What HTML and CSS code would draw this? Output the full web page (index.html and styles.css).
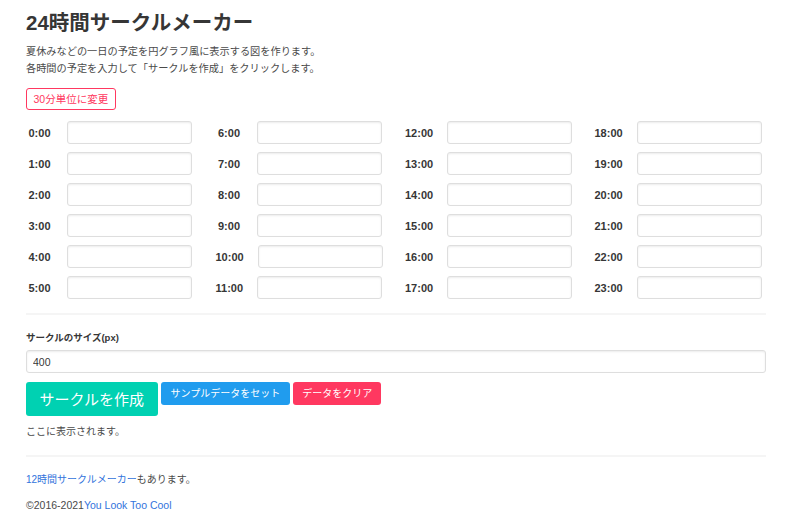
FILE: index.html
```html
<!DOCTYPE html>
<html lang="ja">
<head>
  <meta charset="UTF-8">
  <title>24時間サークルメーカー</title>
  <link rel="stylesheet" href="styles.css">
</head>
<body>
  <div class="page">
    <h1 class="title">24時間サークルメーカー</h1>
    <p class="desc">夏休みなどの一日の予定を円グラフ風に表示する図を作ります。<br>各時間の予定を入力して「サークルを作成」をクリックします。</p>

    <button class="btn btn-outline">30分単位に変更</button>

    <div class="hours" id="hours"></div>

    <hr>

    <label class="field-label" for="size">サークルのサイズ(px)</label>
    <input class="input input-size" id="size" type="text" value="400">

    <div class="buttons">
      <button class="btn btn-primary">サークルを作成</button>
      <button class="btn btn-info">サンプルデータをセット</button>
      <button class="btn btn-danger">データをクリア</button>
    </div>

    <p class="result">ここに表示されます。</p>

    <hr class="hr-bottom">

    <p class="note"><a href="#">12時間サークルメーカー</a>もあります。</p>
    <p class="copy">©2016-2021<a href="#">You Look Too Cool</a></p>
  </div>

  <script>
    const hours = document.getElementById("hours");
    for (let c = 0; c < 4; c++) {
      const col = document.createElement("div");
      col.className = "hour-col";
      for (let r = 0; r < 6; r++) {
        const h = c * 6 + r;
        const row = document.createElement("div");
        row.className = "hour-row";
        row.innerHTML = `<label class="hour-label">${h}:00</label><input class="input hour-input" type="text">`;
        col.appendChild(row);
      }
      hours.appendChild(col);
    }
  </script>
</body>
</html>
```

FILE: styles.css
```css
body {
  margin: 0;
  font-family: 'Liberation Sans', 'Noto Sans CJK JP', sans-serif;
  background: #fff;
  color: #4a4a4a;
  font-size: 10px;
}

.page {
  width: 740px;
  padding: 11px 34px 0 26px;
}

.title {
  margin: 0;
  font-size: 20.5px;
  line-height: 24px;
  font-weight: 600;
  color: #363636;
}

.desc {
  margin: 8px 0 0;
  line-height: 17px;
  font-size: 10.2px;
}

.btn {
  font-family: inherit;
  border: 1px solid transparent;
  border-radius: 3px;
  cursor: pointer;
  color: #fff;
  line-height: 1;
  margin: 0;
}

.btn-outline {
  margin-top: 11px;
  height: 22px;
  padding: 0 6.5px;
  font-size: 10.5px;
  background: #fff;
  border-color: #ff3860;
  color: #ff3860;
  display: block;
}

.hours {
  margin-top: 11px;
  display: grid;
  grid-template-columns: repeat(4, 166px);
  column-gap: 23.5px;
}

.hour-col {
  display: flex;
  flex-direction: column;
  gap: 8px;
}

.hour-row {
  display: flex;
  align-items: center;
}

.hour-label {
  width: 28px;
  text-align: center;
  font-weight: bold;
  font-size: 11px;
  color: #363636;
  white-space: nowrap;
}

.input {
  box-sizing: border-box;
  height: 23px;
  border: 1px solid #dedede;
  border-radius: 3px;
  box-shadow: inset 0 1px 2px rgba(10, 10, 10, 0.08);
  font-family: inherit;
  color: #363636;
  margin: 0;
}

.hour-input {
  width: 125px;
  margin-left: 14px;
}

hr {
  margin: 14px 0 0;
  height: 2px;
  border: none;
  background: #f5f5f5;
}

.field-label {
  display: block;
  margin-top: 16px;
  line-height: 14px;
  font-size: 9.5px;
  font-weight: bold;
  color: #363636;
}

.input-size {
  display: block;
  width: 100%;
  margin-top: 5px;
  padding: 0 6px;
  font-size: 10.5px;
}

.buttons {
  margin-top: 9px;
  display: flex;
  align-items: flex-start;
  gap: 3px;
}

.btn-primary {
  height: 34px;
  padding: 0 12.5px;
  font-size: 15px;
  background: #00d1b2;
}

.btn-info {
  height: 23px;
  padding: 0 9px;
  font-size: 10px;
  background: #209cee;
}

.btn-danger {
  height: 23px;
  padding: 0 8px;
  font-size: 10px;
  background: #ff3860;
}

.result {
  margin: 9px 0 0;
  line-height: 14px;
}

.hr-bottom {
  margin-top: 16px;
}

.note {
  margin: 16px 0 0;
  line-height: 14px;
}

.copy {
  margin: 11px 0 0;
  line-height: 14px;
  font-size: 10.5px;
}

a {
  color: #3273dc;
  text-decoration: none;
}
```
